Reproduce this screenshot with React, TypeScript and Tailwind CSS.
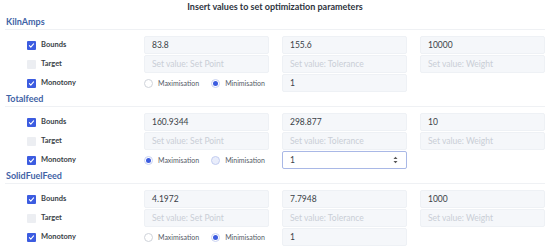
import React from "react";

type Section = {
  name: string;
  bounds: [string, string, string];
  mono: "max" | "min";
  monoValue: string;
  boundsChecked: boolean;
  focused?: boolean;
};

const sections: Section[] = [
  { name: "KilnAmps", bounds: ["83.8", "155.6", "10000"], mono: "min", monoValue: "1", boundsChecked: true },
  { name: "Totalfeed", bounds: ["160.9344", "298.877", "10"], mono: "max", monoValue: "1", boundsChecked: true, focused: true },
  { name: "SolidFuelFeed", bounds: ["4.1972", "7.7948", "1000"], mono: "min", monoValue: "1", boundsChecked: true },
];

const Check = ({ checked }: { checked: boolean }) =>
  checked ? (
    <span className="w-[9px] h-[9px] rounded-[1px] bg-[#3c5ce0] flex items-center justify-center">
      <svg width="7" height="7" viewBox="0 0 10 10" fill="none">
        <path d="M2 5.2l2 2 4-4.4" stroke="white" strokeWidth="1.6" strokeLinecap="round" strokeLinejoin="round" />
      </svg>
    </span>
  ) : (
    <span className="w-[9px] h-[9px] rounded-[1px] bg-[#eceef2]" />
  );

const Radio = ({ on, dim, label }: { on: boolean; dim?: boolean; label: string }) => (
  <div className="flex items-center gap-[5px]">
    {on ? (
      <span className="w-[9px] h-[9px] rounded-full border border-[#c9d2f2] flex items-center justify-center">
        <span className="w-[5px] h-[5px] rounded-full bg-[#3c5ce0]" />
      </span>
    ) : dim ? (
      <span className="w-[9px] h-[9px] rounded-full border border-[#c3cdf0] bg-[#e9edfb]" />
    ) : (
      <span className="w-[9px] h-[9px] rounded-full border border-[#cfd3da] bg-white" />
    )}
    <span className="text-[7px] text-[#555b66]">{label}</span>
  </div>
);

const Field = ({ value, placeholder }: { value?: string; placeholder?: string }) => (
  <div className="h-[18px] rounded-[2px] bg-[#f5f7fa] border border-[#eef1f5] flex items-center pl-[7px] text-[8.5px]">
    {value ? (
      <span className="text-[#3a3f47]">{value}</span>
    ) : (
      <span className="text-[#c9ced6]">{placeholder}</span>
    )}
  </div>
);

const Row = ({ label, checked, children }: { label: string; checked: boolean; children: React.ReactNode }) => (
  <div className="flex h-[18px] items-center">
    <div className="w-[139px] flex items-center pl-[22px] gap-[5px]">
      <Check checked={checked} />
      <span className="text-[7.5px] font-bold text-[#3a3f47]">{label}</span>
    </div>
    <div className="flex-1 grid grid-cols-3 gap-x-[13px]">{children}</div>
  </div>
);

export default function App() {
  return (
    <div className="w-[550px] h-[249px] bg-white overflow-hidden px-[5px] font-['Lato',sans-serif]">
      <div className="h-[15px] leading-[14px] text-center text-[9px] font-bold text-[#2e3440]">
        Insert values to set optimization parameters
      </div>
      {sections.map((s) => (
        <div key={s.name}>
          <div className="h-[15px] leading-[14px] border-b border-[#eff1f4] pl-[1px] text-[9px] font-bold text-[#3f63a6]">
            {s.name}
          </div>
          <div className="pt-[6px] flex flex-col gap-px">
            <Row label="Bounds" checked={s.boundsChecked}>
              <Field value={s.bounds[0]} />
              <Field value={s.bounds[1]} />
              <Field value={s.bounds[2]} />
            </Row>
            <Row label="Target" checked={false}>
              <Field placeholder="Set value: Set Point" />
              <Field placeholder="Set value: Tolerance" />
              <Field placeholder="Set value: Weight" />
            </Row>
            <Row label="Monotony" checked={true}>
              <div className="flex items-center gap-[12px]">
                <Radio on={s.mono === "max"} label="Maximisation" />
                <Radio on={s.mono === "min"} dim={s.focused && s.mono !== "min"} label="Minimisation" />
              </div>
              {s.focused ? (
                <div className="h-[18px] rounded-[2px] bg-white border border-[#a9b8e6] flex items-center justify-between pl-[7px] pr-[8px] text-[8.5px] text-[#3a3f47]">
                  <span>{s.monoValue}</span>
                  <svg width="5" height="8" viewBox="0 0 5 8">
                    <path d="M0.5 3L2.5 0.8L4.5 3Z" fill="#555" />
                    <path d="M0.5 5L2.5 7.2L4.5 5Z" fill="#555" />
                  </svg>
                </div>
              ) : (
                <Field value={s.monoValue} />
              )}
              <div />
            </Row>
          </div>
        </div>
      ))}
    </div>
  );
}
